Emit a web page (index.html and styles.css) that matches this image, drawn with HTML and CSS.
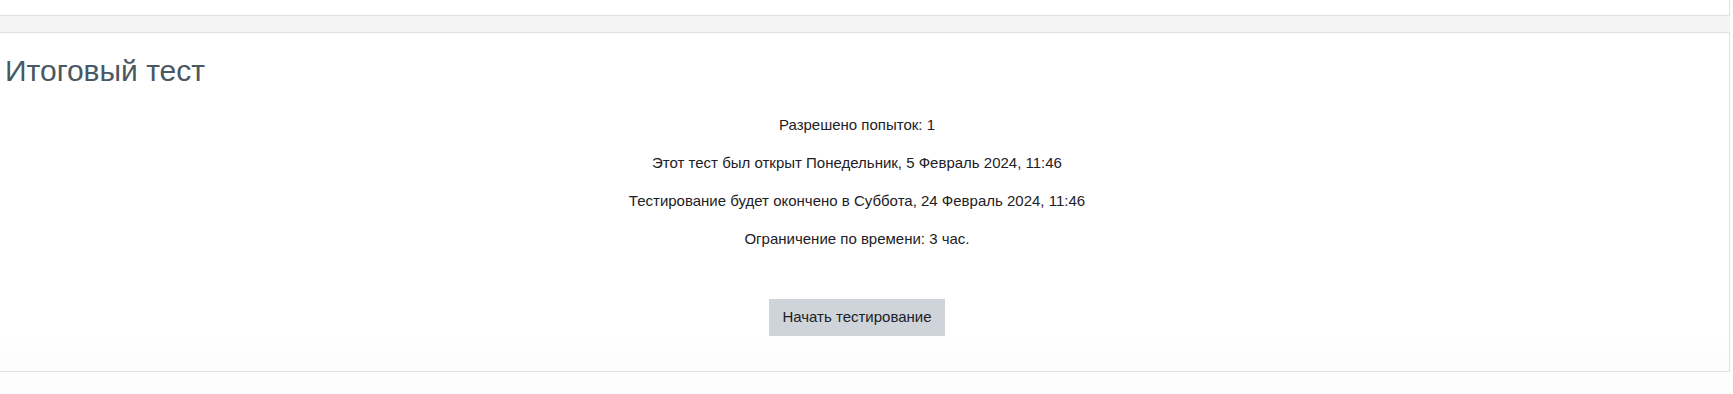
FILE: index.html
```html
<!DOCTYPE html>
<html>
<head>
	<meta charset="utf-8">
	<title>Итоговый тест</title>
	<link rel="stylesheet" href="styles.css">
</head>
<body>
	<div class="page">
		<div class="card card-top"></div>
		<div class="card">
			<div class="card-body">
				<h2 class="quiz-title">Итоговый тест</h2>
				<div class="quizinfo">
					<p>Разрешено попыток: 1</p>
					<p>Этот тест был открыт Понедельник, 5 Февраль 2024, 11:46</p>
					<p>Тестирование будет окончено в Суббота, 24 Февраль 2024, 11:46</p>
					<p>Ограничение по времени: 3 час.</p>
				</div>
				<div class="quizstart">
					<button class="btn" type="button">Начать тестирование</button>
				</div>
			</div>
		</div>
	</div>
</body>
</html>
```

FILE: styles.css
```css
*{
	margin: 0;
	padding: 0;
	box-sizing: border-box;
}
	body{
		background: #fdfdfd;
		font-family: "Liberation Sans", Arial, sans-serif;
		font-size: 15px;
		color: #1d2125;
		overflow: hidden;
	}
	.page{
		margin: 0 3px 0 -16px;
		background: linear-gradient(#f4f4f4, #f7f7f7);
	}
	.card{
		background: #fff;
		border: 1px solid #dee2e6;
	}
	.card-top{
		height: 16px;
		border-top: none;
		margin-bottom: 16px;
	}
	.card-body{
		padding: 20px;
		background: linear-gradient(#fff 90%, #fcfcfc);
	}
	.quiz-title{
		font-size: 30px;
		font-weight: normal;
		line-height: 36px;
		color: #4a5862;
		margin-bottom: 25px;
	}
	.quizinfo{
		text-align: center;
	}
	.quizinfo p{
		line-height: 22px;
		margin-bottom: 16px;
	}
	.quizstart{
		text-align: center;
		padding-top: 33px;
		margin-bottom: 15px;
	}
	.btn{
		font-family: inherit;
		font-size: 15px;
		line-height: 22.5px;
		color: #1d2125;
		background: #ced4da;
		border: 1px solid #ced4da;
		border-radius: 0;
		padding: 6px 12px;
		cursor: pointer;
	}
```
